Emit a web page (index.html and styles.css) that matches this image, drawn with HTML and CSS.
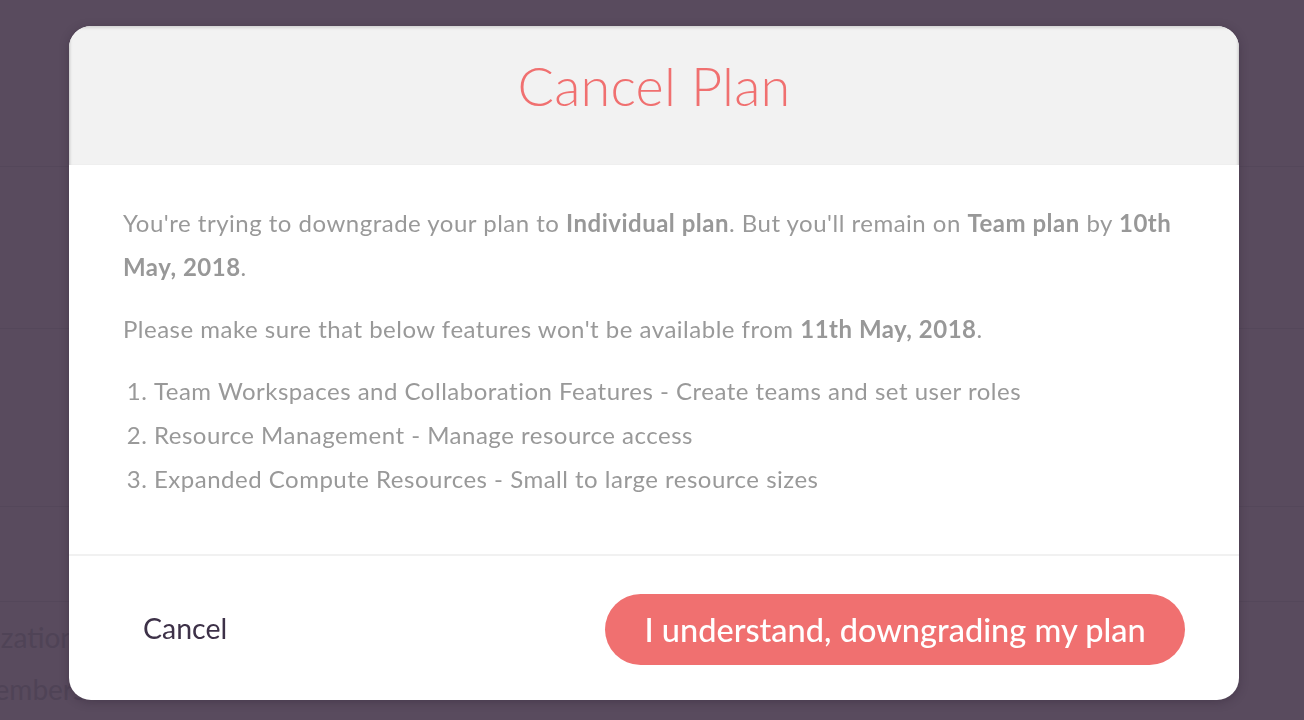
FILE: index.html
```html
<!DOCTYPE html>
<html lang="en">
<head>
<meta charset="utf-8">
<title>Cancel Plan</title>
<link rel="stylesheet" href="styles.css">
</head>
<body>
<div class="page">
  <div class="bg-row bg-row-1"></div>
  <div class="bg-row bg-row-2"></div>
  <div class="bg-row bg-row-3"></div>
  <div class="bg-row bg-row-4"></div>
  <div class="bg-text-row bg-text-row-1"><span class="bg-text">Organization</span></div>
  <div class="bg-text-row bg-text-row-2"><span class="bg-text">Members</span></div>
</div>
<div class="overlay">
  <div class="modal">
    <div class="modal-header">
      <h1 class="modal-title">Cancel Plan</h1>
    </div>
    <div class="modal-body">
      <p class="para">You're trying to downgrade your plan to <b>Individual plan</b>. But you'll remain on <b>Team plan</b> by <b>10th May, 2018</b>.</p>
      <p class="para">Please make sure that below features won't be available from <b>11th May, 2018</b>.</p>
      <ol class="features">
        <li>Team Workspaces and Collaboration Features - Create teams and set user roles</li>
        <li>Resource Management - Manage resource access</li>
        <li>Expanded Compute Resources - Small to large resource sizes</li>
      </ol>
    </div>
    <div class="modal-footer">
      <button class="btn-cancel">Cancel</button>
      <button class="btn-confirm">I understand, downgrading my plan</button>
    </div>
  </div>
</div>
</body>
</html>
```
FILE: styles.css
```css
* { box-sizing: border-box; }
html, body {
  margin: 0;
  padding: 0;
  height: 100%;
  overflow: hidden;
}
body {
  background: #594b5e;
  font-family: Lato, "Open Sans", sans-serif;
}
.page {
  display: flex;
  flex-direction: column;
}
.bg-row {
  border-bottom: 1px solid #54475a;
}
.bg-row-1 { height: 167px; }
.bg-row-2 { height: 162px; }
.bg-row-3 { height: 178px; }
.bg-row-4 { height: 95px; }
.bg-text-row {
  height: 52px;
  display: flex;
  align-items: center;
}
.bg-text-row-1 { margin-top: 9px; }
.bg-text {
  font-size: 28px;
  color: #4f4356;
  white-space: nowrap;
}
.bg-text-row-1 .bg-text { margin-left: -82px; }
.bg-text-row-2 .bg-text { margin-left: -31px; }

.overlay {
  position: fixed;
  inset: 0;
  display: flex;
  align-items: flex-start;
  padding: 26px 0 0 69px;
}
.modal {
  width: 1170px;
  height: 674px;
  background: #fff;
  border-radius: 22px;
  overflow: hidden;
  box-shadow: 0 2px 10px rgba(40, 28, 45, 0.35);
  display: flex;
  flex-direction: column;
}
.modal-header {
  height: 139px;
  background: #f2f2f2;
  display: flex;
  justify-content: center;
  box-shadow: inset 0 2px 3px rgba(0,0,0,0.12), inset 3px 0 3px -2px rgba(0,0,0,0.12), inset -3px 0 3px -2px rgba(0,0,0,0.12);
}
.modal-title {
  margin: 0;
  padding-top: 24px;
  font-weight: 300;
  font-size: 54px;
  line-height: 72px;
  color: #f07070;
  letter-spacing: 0.2px;
}
.modal-body {
  padding: 36px 54px 0 54px;
  height: 391px;
  border-bottom: 2px solid #f1f1f1;
  color: #999;
  font-size: 24px;
  letter-spacing: 0.5px;
  line-height: 44px;
}
.para {
  margin: 0 0 18px 0;
}
.para b {
  font-weight: 700;
  color: #989898;
}
.features {
  margin: 0;
  padding-left: 31px;
}
.modal-footer {
  flex: 1;
  display: flex;
  align-items: center;
  justify-content: space-between;
  padding: 0 54px 0 74px;
}
.btn-cancel {
  border: none;
  background: none;
  padding: 0;
  font-family: inherit;
  font-size: 28.5px;
  color: #3d3148;
  cursor: pointer;
}
.btn-confirm {
  border: none;
  background: #f07070;
  color: #fff;
  font-family: inherit;
  font-size: 32.5px;
  font-weight: 500;
  width: 580px;
  height: 71px;
  border-radius: 36px;
  cursor: pointer;
  margin-top: 2px;
}
```
